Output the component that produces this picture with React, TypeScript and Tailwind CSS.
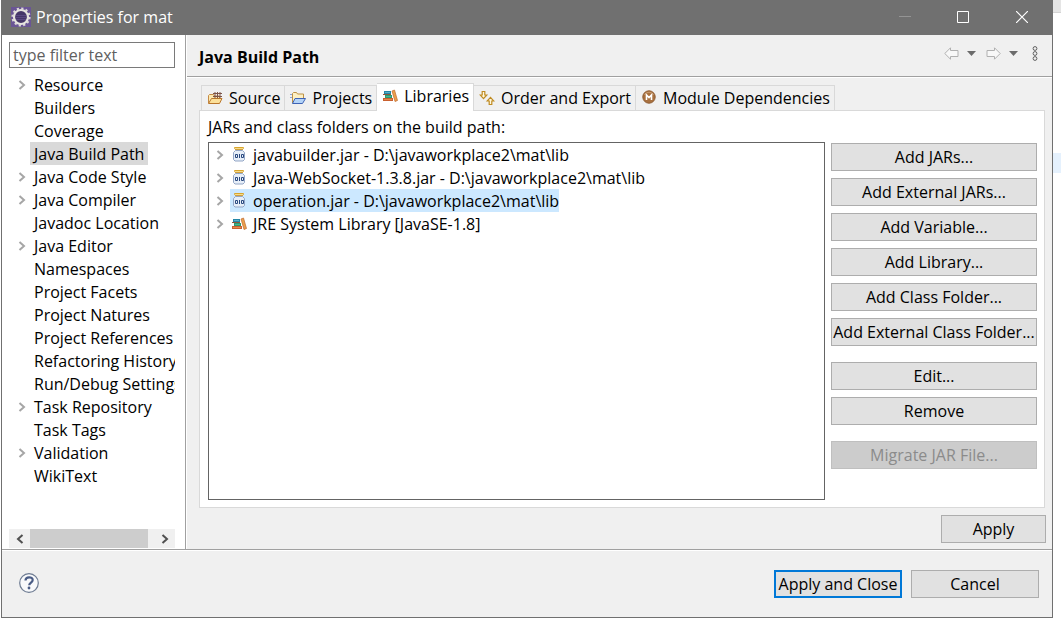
import { useState } from 'react';
import type { ReactNode } from 'react';

const pages = [
  { name: 'Resource', expandable: true },
  { name: 'Builders' },
  { name: 'Coverage' },
  { name: 'Java Build Path' },
  { name: 'Java Code Style', expandable: true },
  { name: 'Java Compiler', expandable: true },
  { name: 'Javadoc Location' },
  { name: 'Java Editor', expandable: true },
  { name: 'Namespaces' },
  { name: 'Project Facets' },
  { name: 'Project Natures' },
  { name: 'Project References' },
  { name: 'Refactoring History' },
  { name: 'Run/Debug Settings' },
  { name: 'Task Repository', expandable: true },
  { name: 'Task Tags' },
  { name: 'Validation', expandable: true },
  { name: 'WikiText' },
];

function EclipseIcon() {
  return (
    <svg width="20" height="20" viewBox="0 0 20 20" aria-hidden="true">
      <rect width="20" height="20" fill="#6a5595" />
      <circle cx="10" cy="10" r="8.6" fill="none" stroke="#dcdad6" strokeWidth="2" strokeDasharray="2.2 2.3" />
      <circle cx="10" cy="10" r="7" fill="#453668" stroke="#e6e4df" strokeWidth="2.2" />
      <path d="M5 8.5h10M4.5 10.5h11M5 12.5h10" stroke="#5f4d88" strokeWidth="0.8" />
    </svg>
  );
}

function SourceIcon() {
  return (
    <svg width="16" height="16" viewBox="0 0 16 16" className="shrink-0" aria-hidden="true">
      <path d="M1.5 13V5.5l1-1h4l1 1.5h5V8" fill="#fce9b0" stroke="#c48a45" />
      <path d="M1.5 13.5l3-5h10.5l-2.5 5z" fill="#fbe09a" stroke="#b9762b" />
      <path d="M6 3.5h9M6 6.5h9M8 2v6M10.5 2v6M13 2v6" stroke="#7d5548" fill="none" />
    </svg>
  );
}

function ProjectsIcon() {
  return (
    <svg width="16" height="16" viewBox="0 0 16 16" className="shrink-0" aria-hidden="true">
      <path d="M2.5 13V3.5l1-1h3l1 1.5h6V8" fill="#fdf0c4" stroke="#bd9145" />
      <path d="M0 4.5h2M0 7.5h2" stroke="#8ba4d6" />
      <path d="M2.5 13.5l2.5-5h10.5l-3 5z" fill="#b4d4f8" stroke="#3f63b5" />
    </svg>
  );
}

function LibraryIcon() {
  return (
    <svg width="16" height="16" viewBox="0 0 16 16" className="shrink-0" aria-hidden="true">
      <rect x="2" y="3" width="7" height="3" fill="#2486a8" />
      <path d="M3 4.5h5" stroke="#57b0c8" />
      <rect x="1" y="6" width="8" height="1" fill="#8a5a3c" />
      <rect x="3" y="7" width="7" height="3" fill="#2b9a72" />
      <path d="M4 8.5h5" stroke="#49b78d" />
      <rect x="1" y="10" width="10" height="3" fill="#c9602f" />
      <path d="M2 11.5h8" stroke="#e58b4c" />
      <path d="M10 3l2.5-1 3 10.5-2.5 1z" fill="#eba04c" stroke="#bf6a30" strokeWidth="0.7" />
    </svg>
  );
}

function OrderIcon() {
  return (
    <svg width="16" height="16" viewBox="0 0 16 16" fill="#fff8de" stroke="#bf8b22" strokeWidth="1.2" className="shrink-0" aria-hidden="true">
      <path d="M3.2 1.5h2.6v3.500h2L4.500 8.600 1.200 5h2z" />
      <path d="M10.200 14.500h2.600V11h2L11.500 7.400 8.200 11h2z" />
    </svg>
  );
}

function ModuleIcon() {
  return (
    <svg width="16" height="16" viewBox="0 0 16 16" className="shrink-0" aria-hidden="true">
      <circle cx="8" cy="7" r="6.2" fill="#a9713f" stroke="#8f5d33" />
      <path d="M3.5 5a5 5 0 0 1 9 0" fill="none" stroke="#c99d72" />
      <path d="M5.5 10V5L8 7.5 10.5 5v5" fill="none" stroke="#fff" strokeWidth="1.6" />
    </svg>
  );
}

function JarIcon() {
  return (
    <svg width="16" height="16" viewBox="0 0 16 16" className="shrink-0" aria-hidden="true">
      <rect x="3" y="0" width="10" height="2" rx="1" fill="#d9a52c" />
      <rect x="4" y="1" width="8" height="1" fill="#f6dc8a" />
      <path d="M4 2.5h8" stroke="#d0a040" />
      <path d="M4.500 3.500h7l2 2v7l-1.500 1.500H4L2.500 12.500v-7z" fill="#e6eef8" stroke="#93a6c6" />
      <g fill="none" stroke="#2b4a80">
        <path d="M4.500 7.500h2v3h-2z" />
        <path d="M8.500 7v4" />
        <path d="M10.500 7.500h2v3h-2z" />
      </g>
    </svg>
  );
}

function Chevron({ left, dark }: { left?: boolean; dark?: boolean }) {
  return (
    <svg width="8" height="10" viewBox="0 0 8 10" fill="none" stroke={dark ? '#505050' : '#a6a6a6'} strokeWidth="2" aria-hidden="true">
      <path d={left ? 'M6.5 1L2 5l4.5 4' : 'M1.5 1L6 5 1.5 9'} />
    </svg>
  );
}

function ArrowMenu({ forward }: { forward?: boolean }) {
  const label = forward ? 'Forward' : 'Back';
  return (
    <div className="flex items-center gap-2">
      <button aria-label={label}>
        <svg width="15" height="13" viewBox="0 0 15 13" fill="#f8f8f8" stroke="#b0b0b0" className={forward ? 'rotate-180' : ''}>
          <path d="M.8 6.5L6.5.8v2.700H14v6H6.500v2.700z" />
        </svg>
      </button>
      <button aria-label={`${label} menu`}>
        <svg width="9" height="5" viewBox="0 0 9 5">
          <path d="M0 0h9L4.500 5z" fill="#6b6b6b" />
        </svg>
      </button>
    </div>
  );
}

const tabs = [
  { name: 'Source', icon: <SourceIcon /> },
  { name: 'Projects', icon: <ProjectsIcon /> },
  { name: 'Libraries', icon: <LibraryIcon /> },
  { name: 'Order and Export', icon: <OrderIcon /> },
  { name: 'Module Dependencies', icon: <ModuleIcon /> },
];

const entries = [
  { name: 'javabuilder.jar - D:\\javaworkplace2\\mat\\lib', icon: <JarIcon /> },
  { name: 'Java-WebSocket-1.3.8.jar - D:\\javaworkplace2\\mat\\lib', icon: <JarIcon /> },
  { name: 'operation.jar - D:\\javaworkplace2\\mat\\lib', icon: <JarIcon /> },
  { name: 'JRE System Library [JavaSE-1.8]', icon: <LibraryIcon /> },
];

const actionGroups = [
  ['Add JARs...', 'Add External JARs...', 'Add Variable...', 'Add Library...', 'Add Class Folder...', 'Add External Class Folder...'],
  ['Edit...', 'Remove'],
  ['Migrate JAR File...'],
];

function PushButton({ children, className = '', disabled }: { children: ReactNode; className?: string; disabled?: boolean }) {
  return (
    <button
      disabled={disabled}
      className={`flex h-7 items-center justify-center whitespace-nowrap ${
        disabled ? 'bg-[#cccccc] text-[#8b8b8b]' : 'bg-[#e1e1e1]'
      } ${className}`}
    >
      {children}
    </button>
  );
}

export default function App() {
  const [page, setPage] = useState('Java Build Path');
  const [tab, setTab] = useState('Libraries');
  const [entry, setEntry] = useState(2);

  return (
    <div className="flex min-h-screen bg-white pl-px font-['Open_Sans','Noto_Sans',sans-serif] text-[16px] leading-6 text-black">
      <div className="flex min-w-0 flex-1 flex-col border-x border-b border-[#707070] bg-[#f0f0f0]">
        {/* title bar */}
        <header className="flex h-[35px] items-center bg-[#707070] pb-0.5 pl-[9px] text-white">
          <EclipseIcon />
          <span className="flex-1 pl-[5px]">Properties for mat</span>
          <div className="flex items-center">
            <button aria-label="Minimize" className="flex w-[58px] justify-center">
              <svg width="12" height="12" viewBox="0 0 12 12" stroke="#949494"><path d="M0 5.5h12" /></svg>
            </button>
            <button aria-label="Maximize" className="flex w-[58px] justify-center">
              <svg width="12" height="12" viewBox="0 0 12 12" fill="none" stroke="#fff"><path d="M.5.5h11v11H.5z" /></svg>
            </button>
            <button aria-label="Close" className="flex w-[60px] justify-center">
              <svg width="12" height="12" viewBox="0 0 12 12" stroke="#fff" strokeWidth="1.2"><path d="M0 0l12 12M12 0L0 12" /></svg>
            </button>
          </div>
        </header>

        <div className="flex flex-1">
          {/* page list */}
          <nav className="flex w-[184px] shrink-0 flex-col border-r border-[#a0a0a0] bg-white pb-px pl-[7px] pr-[10px] pt-[7px]">
            <input
              type="text"
              aria-label="Filter"
              placeholder="type filter text"
              className="h-[26px] w-full border border-[#7a7a7a] px-[3px] outline-none placeholder:text-[#5f5f5f]"
            />
            <ul className="flex-1 overflow-hidden pt-[5px]">
              {pages.map((p) => (
                <li key={p.name} className="flex h-[23px] items-center">
                  <span className="flex w-[21px] shrink-0 justify-center pl-1">{p.expandable && <Chevron />}</span>
                  <button
                    onClick={() => setPage(p.name)}
                    className={`h-[23px] whitespace-nowrap px-1 leading-6 ${page === p.name ? 'bg-[#d9d9d9]' : ''}`}
                  >
                    {p.name}
                  </button>
                </li>
              ))}
            </ul>
            <div className="flex h-[19px] bg-[#f0f0f0]">
              <button aria-label="Scroll left" className="flex w-[21px] items-center justify-center"><Chevron left dark /></button>
              <div className="w-[118px] bg-[#cdcdcd]" />
              <button aria-label="Scroll right" className="ml-auto flex w-[21px] items-center justify-center"><Chevron dark /></button>
            </div>
          </nav>

          {/* page body */}
          <main className="flex min-w-0 flex-1 flex-col border-l border-white">
            <div className="flex h-[42px] items-center border-b border-[#a0a0a0] pl-3 pr-[14px]">
              <h1 className="flex-1 pt-0.5 font-bold">Java Build Path</h1>
              <div className="flex items-center gap-2.5 pb-1">
                <ArrowMenu />
                <ArrowMenu forward />
                <button aria-label="View menu" className="pl-1">
                  <svg width="6" height="15" viewBox="0 0 6 15" fill="none" stroke="#606060">
                    <circle cx="3" cy="2.5" r="1.9" />
                    <circle cx="3" cy="7.5" r="1.9" />
                    <circle cx="3" cy="12.5" r="1.9" />
                  </svg>
                </button>
              </div>
            </div>

            <div className="flex flex-1 flex-col border-t border-white pb-1.5 pl-3 pr-1.5 pt-[5px]">
              <div role="tablist" className="relative -mb-px flex items-end pl-0.5">
                {tabs.map((t) => (
                  <button
                    key={t.name}
                    role="tab"
                    aria-selected={tab === t.name}
                    onClick={() => setTab(t.name)}
                    className={`flex items-center gap-1.5 whitespace-nowrap border-r border-t border-[#d9d9d9] pl-[5px] pr-1 first:border-l ${
                      tab === t.name ? 'h-7 bg-white pb-1' : 'h-[26px] border-b'
                    }`}
                  >
                    {t.icon}
                    {t.name}
                  </button>
                ))}
              </div>

              <div className="mr-px flex flex-1 gap-1.5 border border-[#d9d9d9] bg-white pb-[7px] pl-2 pr-[7px] pt-1.5">
                <div className="flex min-w-0 flex-1 flex-col">
                  <p className="h-[25px] leading-[21px]">JARs and class folders on the build path:</p>
                  <ul className="flex-1 border border-[#646464] pl-[7px]">
                    {entries.map((e, i) => (
                      <li key={e.name} className="flex h-[23px] items-center">
                        <Chevron />
                        <button
                          onClick={() => setEntry(i)}
                          className={`ml-1.5 flex h-[23px] items-center gap-1.5 whitespace-nowrap pl-px leading-6 ${entry === i ? 'bg-[#cce8ff]' : ''}`}
                        >
                          {e.icon}
                          {e.name}
                        </button>
                      </li>
                    ))}
                  </ul>
                </div>
                <div className="flex w-[206px] flex-col gap-4 pt-[26px]">
                  {actionGroups.map((group) => (
                    <div key={group[0]} className="flex flex-col gap-[7px]">
                      {group.map((name) => (
                        <PushButton key={name} className="border border-[#adadad] disabled:border-[#bfbfbf]" disabled={name.startsWith('Migrate')}>
                          {name}
                        </PushButton>
                      ))}
                    </div>
                  ))}
                </div>
              </div>

              <div className="flex justify-end pt-[7px]">
                <PushButton className="w-[105px] border border-[#adadad]">Apply</PushButton>
              </div>
            </div>
          </main>
        </div>

        <footer className="flex h-[68px] items-center gap-[9px] border-t border-[#a0a0a0] pl-[17px] pr-[13px] shadow-[inset_0_1px_0_#ffffff]">
          <button aria-label="Help" className="mr-auto pb-0.5">
            <svg width="20" height="20" viewBox="0 0 20 20" fill="none" aria-hidden="true">
              <circle cx="10" cy="10" r="9.3" fill="#f8f9fb" stroke="#6d7b92" strokeWidth="1.2" />
              <path d="M6.5 7.5c0-4.2 7.2-4.2 7.2-.4 0 2.4-3.500 2.600-3.500 5.200" stroke="#4a5c85" strokeWidth="2.2" />
              <circle cx="10" cy="15" r="1.4" fill="#4a5c85" />
            </svg>
          </button>
          <PushButton className="w-32 border-2 border-[#0078d7]">Apply and Close</PushButton>
          <PushButton className="w-32 border border-[#adadad]">Cancel</PushButton>
        </footer>
      </div>

      {/* strip of the window behind */}
      <div className="w-2 shrink-0">
        <div className="h-[13px] border-b border-[#d4d4d4] bg-[#e5e5e5]" />
        <div className="mt-[140px] h-5 bg-[#e5f1fd]" />
      </div>
    </div>
  );
}
